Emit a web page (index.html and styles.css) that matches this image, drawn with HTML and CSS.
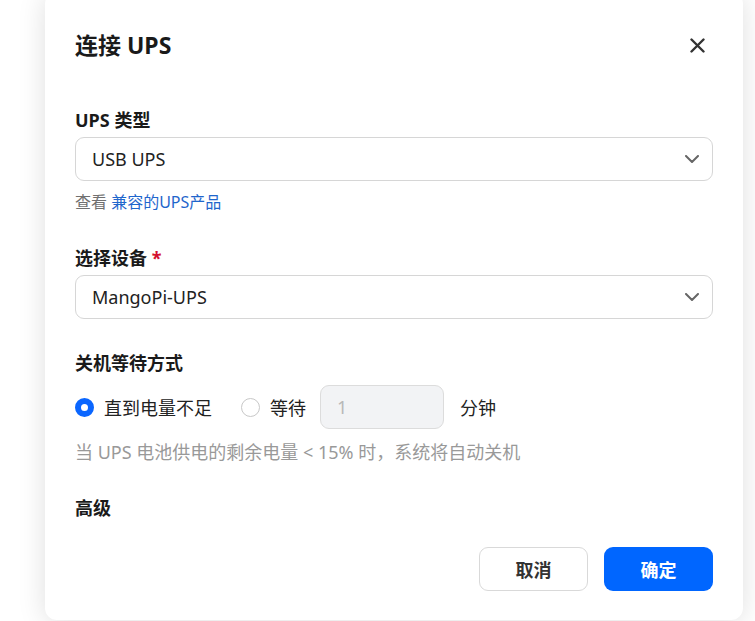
FILE: index.html
```html
<!DOCTYPE html>
<html lang="zh-CN">
<head>
<meta charset="utf-8">
<title>连接 UPS</title>
<link rel="stylesheet" href="styles.css">
</head>
<body>
<div class="dialog">
  <div class="header">
    <h1 class="title">连接 UPS</h1>
    <button class="close" aria-label="关闭">
      <svg width="15" height="15" viewBox="0 0 15 15"><path d="M1.5 1.5 L13.5 13.5 M13.5 1.5 L1.5 13.5" stroke="#333" stroke-width="2.4" stroke-linecap="round" fill="none"/></svg>
    </button>
  </div>
  <div class="body">
    <div class="label label-first">UPS 类型</div>
    <div class="select">
      <span>USB UPS</span>
      <svg class="chev" width="14" height="8" viewBox="0 0 14 8"><path d="M1 1 L7 7 L13 1" stroke="#666" stroke-width="2" fill="none" stroke-linecap="round" stroke-linejoin="round"/></svg>
    </div>
    <div class="help">查看 <a class="link">兼容的UPS产品</a></div>

    <div class="label label-sec">选择设备 <span class="req">*</span></div>
    <div class="select">
      <span>MangoPi-UPS</span>
      <svg class="chev" width="14" height="8" viewBox="0 0 14 8"><path d="M1 1 L7 7 L13 1" stroke="#666" stroke-width="2" fill="none" stroke-linecap="round" stroke-linejoin="round"/></svg>
    </div>

    <div class="label label-sec2">关机等待方式</div>
    <div class="radio-row">
      <span class="radio checked"></span>
      <span class="radio-text">直到电量不足</span>
      <span class="radio radio2"></span>
      <span class="radio-text">等待</span>
      <div class="num">1</div>
      <span class="unit">分钟</span>
    </div>
    <div class="hint">当 UPS 电池供电的剩余电量 &lt; 15% 时，系统将自动关机</div>

    <div class="label label-adv">高级</div>
  </div>
  <div class="footer">
    <button class="btn btn-cancel">取消</button>
    <button class="btn btn-ok">确定</button>
  </div>
</div>
</body>
</html>
```

FILE: styles.css
```css
html, body {
  margin: 0;
  padding: 0;
  background: #ffffff;
}
body {
  font-family: "Noto Sans", "Noto Sans CJK SC", sans-serif;
  color: #1a1a1a;
  overflow: hidden;
  height: 621px;
}
.dialog {
  margin: -8px 0 0 45px;
  width: 698px;
  height: 628px;
  box-sizing: border-box;
  background: #fff;
  border-radius: 12px;
  box-shadow: 0 2px 28px rgba(0, 0, 0, 0.13);
  padding: 38px 30px 0 30px;
}
.header {
  display: flex;
  align-items: center;
  justify-content: space-between;
  height: 30px;
}
.title {
  margin: 0;
  font-size: 23px;
  line-height: 30px;
  font-weight: 700;
  font-family: "Noto Sans", "Noto Sans CJK SC", sans-serif;
  color: #1a1a1a;
}
.close {
  border: none;
  background: none;
  padding: 0;
  margin-right: 8px;
  width: 15px;
  height: 15px;
  display: flex;
}
.label {
  font-size: 18px;
  line-height: 22px;
  font-weight: 700;
  color: #1a1a1a;
  margin-bottom: 6px;
}
.label-first { margin-top: 49px; }
.label-sec { margin-top: 35px; }
.label-sec2 { margin-top: 33px; margin-bottom: 11px; }
.label-adv { margin-top: 34px; margin-bottom: 0; }
.req { color: #d4102f; }
.select {
  height: 44px;
  box-sizing: border-box;
  border: 1px solid #d6d6d6;
  border-radius: 9px;
  display: flex;
  align-items: center;
  justify-content: space-between;
  padding: 0 13px 0 16px;
  font-size: 18px;
  color: #222;
}
.chev { display: block; }
.help {
  margin-top: 11px;
  font-size: 16px;
  line-height: 20px;
  color: #707070;
}
.link { color: #1f66cc; }
.radio-row {
  display: flex;
  align-items: center;
  height: 44px;
  font-size: 18px;
  color: #222;
}
.radio {
  width: 19px;
  height: 19px;
  box-sizing: border-box;
  border-radius: 50%;
  border: 1px solid #c8c8c8;
  margin-right: 10px;
  flex: none;
}
.radio.checked {
  border: 6px solid #0a66ff;
  background: #fff;
}
.radio2 { margin-left: 29px; }
.num {
  margin-left: 14px;
  width: 124px;
  height: 44px;
  box-sizing: border-box;
  border: 1px solid #dcdcdc;
  border-radius: 9px;
  background: #f2f3f5;
  color: #b8b8b8;
  display: flex;
  align-items: center;
  padding-left: 16px;
}
.unit { margin-left: 16px; }
.hint {
  margin-top: 12px;
  font-size: 18px;
  line-height: 22px;
  color: #999;
}
.footer {
  display: flex;
  justify-content: flex-end;
  gap: 16px;
  margin-top: 28px;
}
.btn {
  width: 109px;
  height: 44px;
  border-radius: 9px;
  font-family: "Noto Sans", "Noto Sans CJK SC", sans-serif;
  font-size: 18px;
  font-weight: 700;
  cursor: pointer;
}
.btn-cancel {
  background: #fff;
  border: 1px solid #d9d9d9;
  color: #333;
}
.btn-ok {
  background: #0066ff;
  border: none;
  color: #fff;
}
```
